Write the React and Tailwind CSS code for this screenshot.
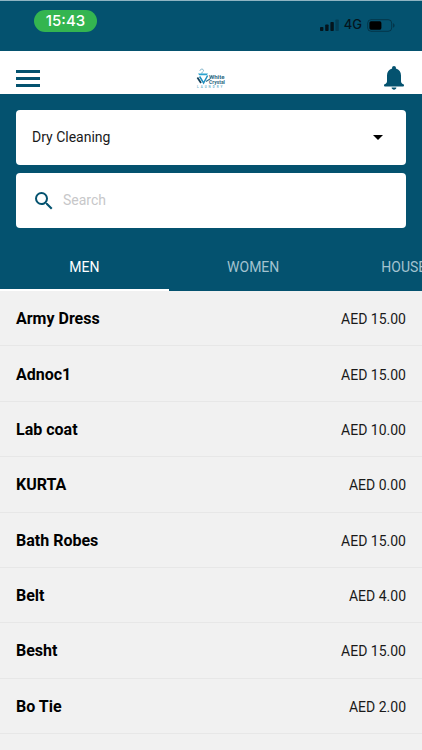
import React, { useState } from 'react';

const items = [
    { id: 1, name: 'Army Dress', price: '15.00' },
    { id: 2, name: 'Adnoc1', price: '15.00' },
    { id: 3, name: 'Lab coat', price: '10.00' },
    { id: 4, name: 'KURTA', price: '0.00' },
    { id: 5, name: 'Bath Robes', price: '15.00' },
    { id: 6, name: 'Belt', price: '4.00' },
    { id: 7, name: 'Besht', price: '15.00' },
    { id: 8, name: 'Bo Tie', price: '2.00' },
];

const tabs = ['MEN', 'WOMEN', 'HOUSEHOLD'];

const StatusBar = () => (
    <div className="flex h-[51px] items-start justify-between border-t border-[#8fb4c2] pt-[9px] pl-[34px] pr-[27px]">
        <span className="flex h-[22px] w-[63px] items-center justify-center rounded-full bg-[#34b550] font-['Inter',sans-serif] text-[15px] font-medium text-white">
            15:43
        </span>
        <div className="flex h-[30px] items-center gap-[5px] text-[#04151d]">
            <svg width="19" height="12" viewBox="0 0 19 12" fill="currentColor" aria-hidden="true">
                <rect x="0" y="8" width="3.4" height="4" rx="0.8" />
                <rect x="5.2" y="5.5" width="3.4" height="6.5" rx="0.8" />
                <rect x="10.4" y="3" width="3.4" height="9" rx="0.8" />
                <rect x="15.4" y="0.5" width="3.4" height="11.5" rx="0.8" opacity="0.3" />
            </svg>
            <span className="font-['Inter',sans-serif] text-[13px] font-medium">4G</span>
            <svg width="28" height="13" viewBox="0 0 28 13" aria-hidden="true">
                <rect x="0.7" y="0.7" width="24" height="11.6" rx="3.4" fill="none" stroke="currentColor" strokeWidth="1" opacity="0.45" />
                <rect x="2.4" y="2.3" width="12" height="8.4" rx="1.6" fill="#000" />
                <path d="M26 4.3c1 .4 1.6 1.2 1.6 2.2S27 8.300 26 8.700z" fill="currentColor" opacity="0.45" />
            </svg>
        </div>
    </div>
);

const Logo = () => (
    <svg width="32" height="22" viewBox="0 0 32 22" role="img" aria-label="White Crystal Laundry">
        <path d="M5 2.800C5 .8 8.500 .4 8.500 2.600c0 1.300-1.800 1.400-1.800 3" fill="none" stroke="#6fa9c2" strokeWidth="0.9" />
        <path d="M3 5.600h10l-1.300 1.600H4.300z" fill="#2ba3cf" />
        <path d="M2.400 9.500l3.600 5.500" fill="none" stroke="#123f58" strokeWidth="1.700" />
        <path d="M4.600 8.500l4 6.500 4-7.500" fill="none" stroke="#1d8fc0" strokeWidth="1.500" />
        <path d="M11 13.500l4-2.500" fill="none" stroke="#2c6e8c" strokeWidth="1.100" />
        <text x="14" y="11" fontFamily="Roboto, sans-serif" fontSize="6" fontWeight="700" fill="#2d6a83">White</text>
        <text x="14" y="15.500" fontFamily="Roboto, sans-serif" fontSize="5" fontWeight="700" fill="#2d6a83">Crystal</text>
        <text x="2" y="20" fontFamily="Roboto, sans-serif" fontSize="3" fontWeight="700" fill="#6fb4cd" letterSpacing="2">LAUNDRY</text>
    </svg>
);

const Header = () => (
    <header className="grid h-[43px] grid-cols-3 items-center bg-white px-4 pt-3 text-[#04526f]">
        <button type="button" aria-label="Menu" className="justify-self-start">
            <svg width="24" height="17" viewBox="0 0 24 17" fill="currentColor" className="block">
                <rect y="0" width="24" height="3" />
                <rect y="7" width="24" height="3" />
                <rect y="14" width="24" height="3" />
            </svg>
        </button>
        <div className="justify-self-center">
            <Logo />
        </div>
        <button type="button" aria-label="Notifications" className="justify-self-end pb-[1px] pr-[2px]">
            <svg width="20" height="24" viewBox="0 0 20 24" fill="currentColor" className="block">
                <path d="M10 0c1.100 0 1.900.8 1.900 1.800v.7c3.200.8 5.100 3.500 5.100 6.900v5.800c0 1.400.9 2.400 2.200 3 .5.300.8.700.8 1.200H0c0-.5.300-.9.800-1.200 1.300-.6 2.200-1.600 2.200-3V9.400C3 6 4.900 3.300 8.100 2.500v-.7C8.100.8 8.900 0 10 0z" />
                <rect x="0" y="18.400" width="20" height="2.200" rx="1" />
                <path d="M7.600 21.600h4.800c-.1 1.300-1.100 2.100-2.400 2.100s-2.300-.8-2.400-2.100z" />
            </svg>
        </button>
    </header>
);

const App = () => {
    const [service, setService] = useState('dry');
    const [search, setSearch] = useState('');
    const [activeTab, setActiveTab] = useState('MEN');

    const visible = items.filter(item => item.name.toLowerCase().includes(search.toLowerCase()));

    return (
        <div className="flex min-h-screen flex-col overflow-x-hidden bg-[#f1f1f1] font-['Roboto',sans-serif]">
            <div className="bg-[#04526f]">
                <StatusBar />
                <Header />

                <div className="flex flex-col gap-2 px-4 pt-4">
                    <div className="flex h-[55px] items-center rounded bg-white pr-[23px]">
                        <select
                            aria-label="Service"
                            value={service}
                            onChange={(e) => setService(e.target.value)}
                            className="h-full min-w-0 flex-1 appearance-none bg-transparent pb-[1px] pl-4 text-sm text-[#1a1a1a] outline-none"
                        >
                            <option value="dry">Dry Cleaning</option>
                            <option value="wash">Washing</option>
                            <option value="iron">Ironing</option>
                        </select>
                        <svg width="10" height="5" viewBox="0 0 10 5" aria-hidden="true">
                            <path d="M0 0h10L5 5z" fill="#000" />
                        </svg>
                    </div>

                    <div className="flex h-[55px] items-center gap-[7px] rounded bg-white px-4">
                        <svg width="24" height="24" viewBox="0 0 24 24" fill="#04526f" className="shrink-0" aria-hidden="true">
                            <path d="M15.500 14h-.79l-.28-.27A6.471 6.471 0 0 0 16 9.500 6.500 6.500 0 1 0 9.500 16c1.610 0 3.090-.59 4.230-1.570l.27.28v.79l5 4.990L20.490 19l-4.990-5zm-6 0C7.010 14 5 11.990 5 9.500S7.010 5 9.500 5 14 7.010 14 9.500 11.990 14 9.500 14z" />
                        </svg>
                        <input
                            type="text"
                            aria-label="Search"
                            placeholder="Search"
                            value={search}
                            onChange={(e) => setSearch(e.target.value)}
                            className="h-full min-w-0 flex-1 bg-transparent pb-[1px] text-sm text-[#1a1a1a] outline-none placeholder:text-[#c7c7c9]"
                        />
                    </div>
                </div>

                <div role="tablist" className="mt-[15px] flex overflow-hidden">
                    {tabs.map(tab => (
                        <button
                            key={tab}
                            type="button"
                            role="tab"
                            aria-selected={activeTab === tab}
                            onClick={() => setActiveTab(tab)}
                            className={`h-12 w-2/5 shrink-0 border-b-2 pt-[2px] text-sm ${activeTab === tab ? 'border-white text-white' : 'border-transparent text-[#a3c3d0]'}`}
                        >
                            {tab}
                        </button>
                    ))}
                </div>
            </div>

            <ul className="flex flex-1 flex-col pb-4">
                {visible.map(item => (
                    <li key={item.id} className="flex min-h-[55px] flex-1 items-center justify-between border-b border-[#e7e7e7] px-4 pt-[2px]">
                        <span className="text-base font-bold text-black">{item.name}</span>
                        <span className="text-sm text-[#1a1a1a]">AED {item.price}</span>
                    </li>
                ))}
            </ul>
        </div>
    );
};

export default App;
